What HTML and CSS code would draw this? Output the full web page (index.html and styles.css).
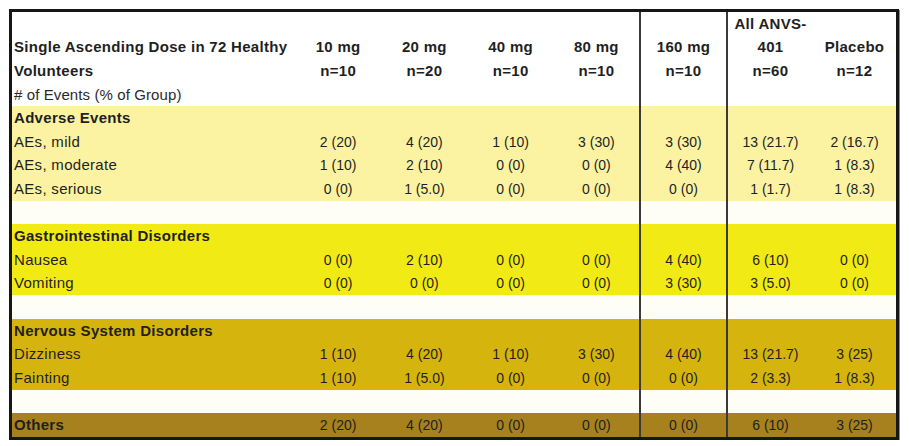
FILE: index.html
```html
<!DOCTYPE html>
<html>
<head>
<meta charset="utf-8">
<link rel="stylesheet" href="styles.css">
</head>
<body>
<div class="frame">
<table class="ae">
  <colgroup>
    <col class="c-label"><col class="c-dose"><col class="c-dose"><col class="c-dose"><col class="c-dose"><col class="c-160"><col class="c-all"><col class="c-pbo">
  </colgroup>
  <tbody>
    <tr class="hd">
      <td></td><td></td><td></td><td></td><td></td><td class="sep"></td><td class="sep b">All ANVS-</td><td></td>
    </tr>
    <tr class="hd b">
      <td class="lbl">Single Ascending Dose in 72 Healthy</td><td>10 mg</td><td>20 mg</td><td>40 mg</td><td>80 mg</td><td class="sep">160 mg</td><td class="sep">401</td><td>Placebo</td>
    </tr>
    <tr class="hd b">
      <td class="lbl">Volunteers</td><td>n=10</td><td>n=20</td><td>n=10</td><td>n=10</td><td class="sep">n=10</td><td class="sep">n=60</td><td>n=12</td>
    </tr>
    <tr class="hd">
      <td class="lbl sub"># of Events (% of Group)</td><td></td><td></td><td></td><td></td><td class="sep"></td><td class="sep"></td><td></td>
    </tr>

    <tr class="g1 b"><td class="lbl">Adverse Events</td><td></td><td></td><td></td><td></td><td class="sep"></td><td class="sep"></td><td></td></tr>
    <tr class="g1"><td class="lbl">AEs, mild</td><td>2 (20)</td><td>4 (20)</td><td>1 (10)</td><td>3 (30)</td><td class="sep">3 (30)</td><td class="sep">13 (21.7)</td><td>2 (16.7)</td></tr>
    <tr class="g1"><td class="lbl">AEs, moderate</td><td>1 (10)</td><td>2 (10)</td><td>0 (0)</td><td>0 (0)</td><td class="sep">4 (40)</td><td class="sep">7 (11.7)</td><td>1 (8.3)</td></tr>
    <tr class="g1"><td class="lbl">AEs, serious</td><td>0 (0)</td><td>1 (5.0)</td><td>0 (0)</td><td>0 (0)</td><td class="sep">0 (0)</td><td class="sep">1 (1.7)</td><td>1 (8.3)</td></tr>
    <tr class="blank"><td></td><td></td><td></td><td></td><td></td><td class="sep"></td><td class="sep"></td><td></td></tr>

    <tr class="g2 b"><td class="lbl">Gastrointestinal Disorders</td><td></td><td></td><td></td><td></td><td class="sep"></td><td class="sep"></td><td></td></tr>
    <tr class="g2"><td class="lbl">Nausea</td><td>0 (0)</td><td>2 (10)</td><td>0 (0)</td><td>0 (0)</td><td class="sep">4 (40)</td><td class="sep">6 (10)</td><td>0 (0)</td></tr>
    <tr class="g2"><td class="lbl">Vomiting</td><td>0 (0)</td><td>0 (0)</td><td>0 (0)</td><td>0 (0)</td><td class="sep">3 (30)</td><td class="sep">3 (5.0)</td><td>0 (0)</td></tr>
    <tr class="blank"><td></td><td></td><td></td><td></td><td></td><td class="sep"></td><td class="sep"></td><td></td></tr>

    <tr class="g3 b"><td class="lbl">Nervous System Disorders</td><td></td><td></td><td></td><td></td><td class="sep"></td><td class="sep"></td><td></td></tr>
    <tr class="g3"><td class="lbl">Dizziness</td><td>1 (10)</td><td>4 (20)</td><td>1 (10)</td><td>3 (30)</td><td class="sep">4 (40)</td><td class="sep">13 (21.7)</td><td>3 (25)</td></tr>
    <tr class="g3"><td class="lbl">Fainting</td><td>1 (10)</td><td>1 (5.0)</td><td>0 (0)</td><td>0 (0)</td><td class="sep">0 (0)</td><td class="sep">2 (3.3)</td><td>1 (8.3)</td></tr>
    <tr class="blank"><td></td><td></td><td></td><td></td><td></td><td class="sep"></td><td class="sep"></td><td></td></tr>

    <tr class="g4"><td class="lbl b">Others</td><td>2 (20)</td><td>4 (20)</td><td>0 (0)</td><td>0 (0)</td><td class="sep">0 (0)</td><td class="sep">6 (10)</td><td>3 (25)</td></tr>
  </tbody>
</table>
</div>
</body>
</html>
```

FILE: styles.css
```css
html, body {
  margin: 0;
  padding: 0;
  background: #ffffff;
}

body {
  padding: 9px 0 0 9px;
  font-family: "Liberation Sans", Arial, Helvetica, sans-serif;
  color: #1f1f1f;
}

.frame {
  width: 884px;
  border: 3px solid #161616;
  box-shadow: 1px 1px 0 #8a8a8a;
}

.ae {
  width: 884px;
  table-layout: fixed;
  border-collapse: collapse;
  border-spacing: 0;
  font-size: 15px;
  letter-spacing: 0.3px;
}

.c-label { width: 283px; }
.c-dose  { width: 86.25px; }
.c-160   { width: 87px; }
.c-all   { width: 86px; }
.c-pbo   { width: 83px; }

.ae td {
  height: 23.6px;
  padding: 0;
  text-align: center;
  vertical-align: middle;
  white-space: nowrap;
  line-height: 16px;
}

.ae tr:not(.hd) td:not(.lbl) {
  font-size: 14px;
  letter-spacing: 0;
}

.ae td.lbl {
  text-align: left;
  padding-left: 2px;
}

.ae td.sep {
  border-left: 2px solid #3a3a3a;
}

.b td, td.b {
  font-weight: bold;
}

.sub {
  font-size: 15px;
  letter-spacing: 0.1px;
  color: #2a2a2a;
}

.hd { background: #ffffff; }
.g1 { background: #fbf3a2; }
.g2 { background: #f2ea15; }
.g3 { background: #d6b40e; }
.g4 { background: #a8811f; }
.blank { background: #fffef6; }
```
